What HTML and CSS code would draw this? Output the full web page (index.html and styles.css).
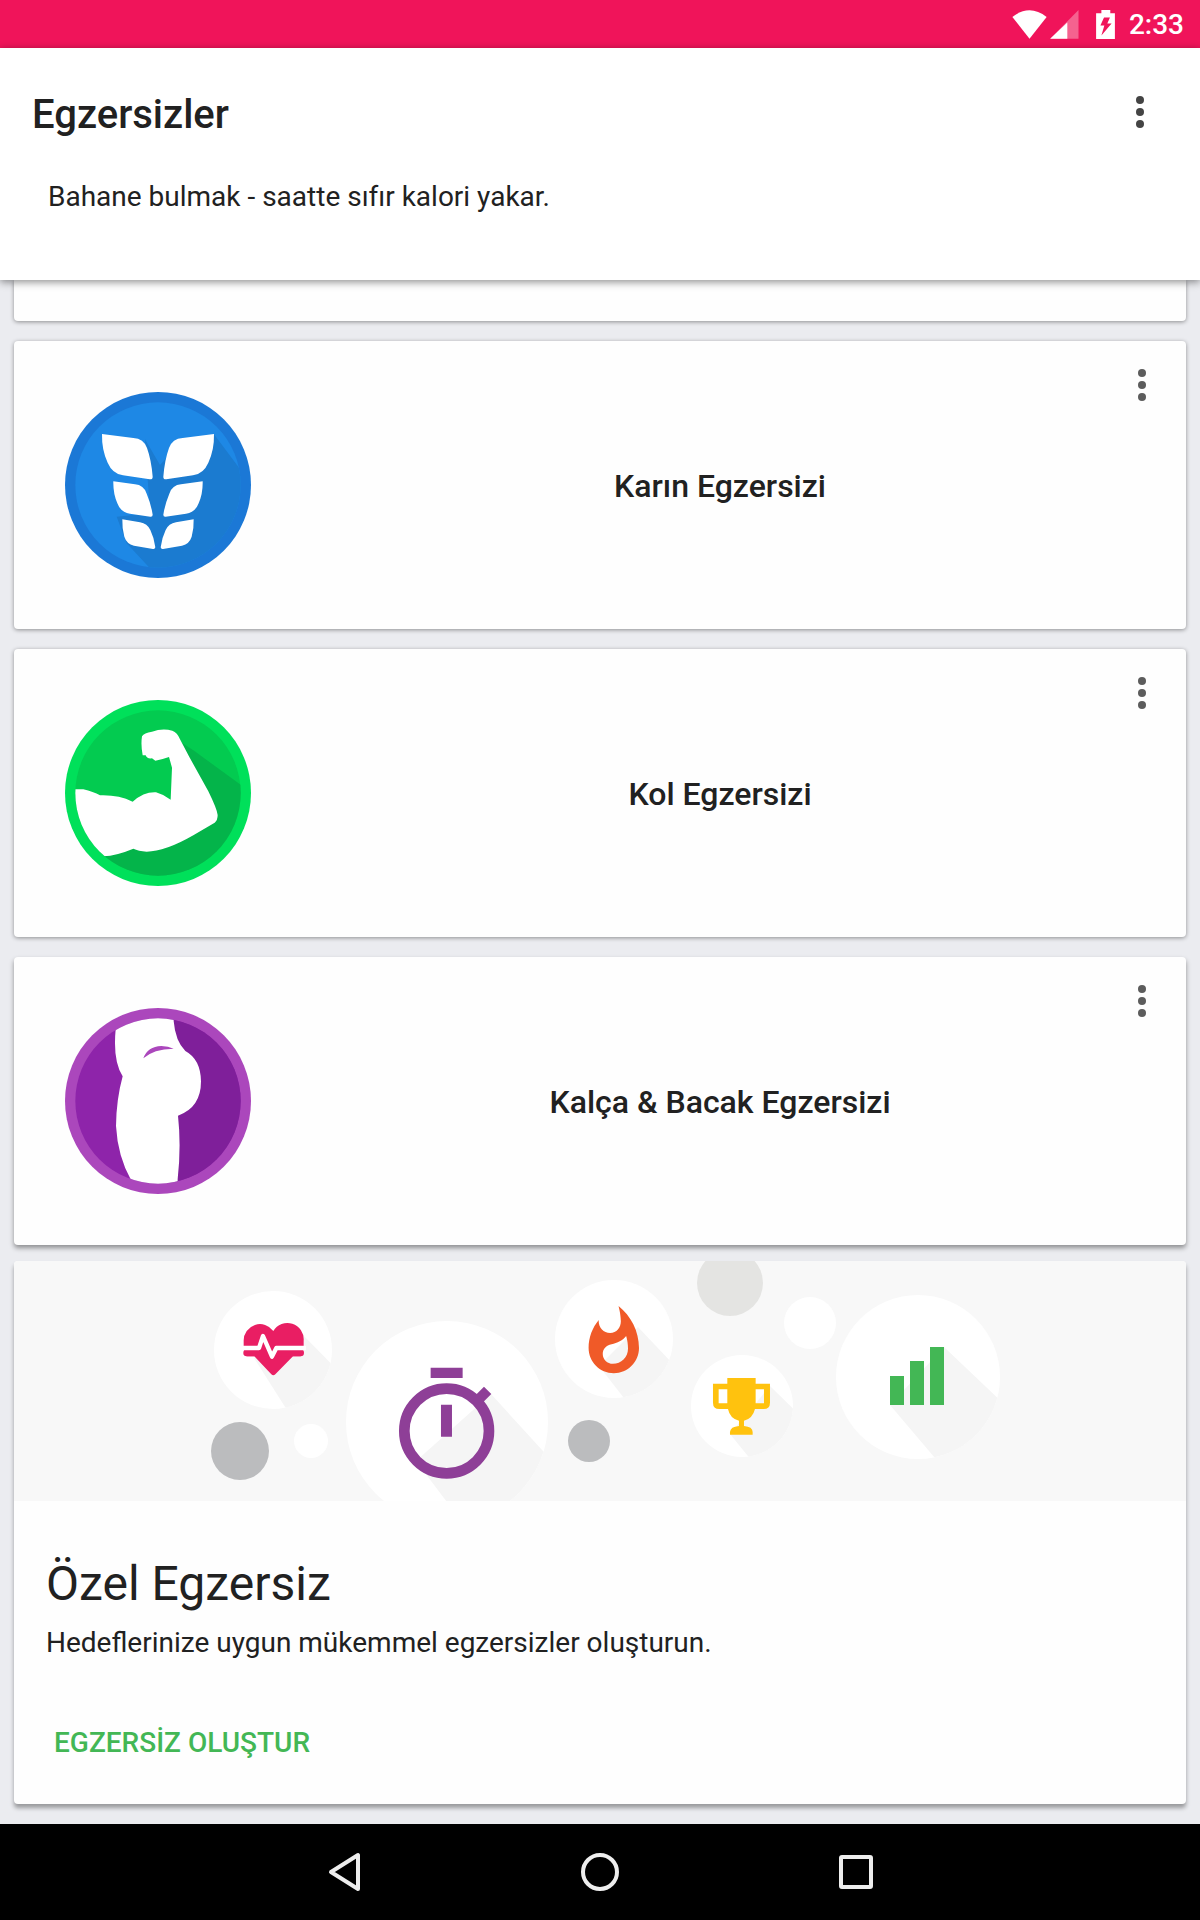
FILE: index.html
```html
<!DOCTYPE html>
<html lang="tr">
<head>
    <meta charset="UTF-8" />
    <meta name="viewport" content="width=device-width, initial-scale=1.0"/>
    <title>Egzersizler</title>
    <link rel="stylesheet" href="styles.css">
</head>
<body>
<div class="status-bar">
    <svg class="wifi" viewBox="98 28 104 88"><path d="M150 115L98 49Q150 9 202 49z"/></svg>
    <svg class="signal" viewBox="212 28 87 88">
        <path class="dim" d="M298 28V115H212z"/>
        <path d="M264 66V115H212z"/>
    </svg>
    <svg class="battery" viewBox="348 27 57 88">
        <path d="M364 27h27v10h14v78h-57V37h16z"/>
        <path class="bolt" d="M372 50h18l-8 18h13l-31 36 9-30h-12z"/>
    </svg>
    <span class="time">2:33</span>
</div>

<header class="header">
    <div class="toolbar">
        <h1>Egzersizler</h1>
        <button class="menu-btn" aria-label="Menü">
            <svg viewBox="0 0 8 32"><circle cx="4" cy="4" r="4"/><circle cx="4" cy="16" r="4"/><circle cx="4" cy="28" r="4"/></svg>
        </button>
    </div>
    <p class="quote">Bahane bulmak - saatte sıfır kalori yakar.</p>
</header>

<main class="list">
    <div class="card card-peek"></div>

    <!-- Abs -->
    <section class="card workout">
        <svg class="workout-icon" viewBox="45 36 558 558">
            <clipPath id="absClip"><circle cx="324" cy="315" r="248"/></clipPath>
            <circle cx="324" cy="315" r="279" fill="#1b78d6"/>
            <circle cx="324" cy="315" r="248" fill="#1e88e5"/>
            <path clip-path="url(#absClip)" fill="#1b7bd0" d="M285 178L330 255 380 200 492 163 566 262 640 350 560 640 370 640 230 490 200 410 300 400z"/>
            <g id="absHalf" fill="#fff">
                <path d="M156 162L250 174Q281 176 291 204Q304 240 308 290Q308 299 299 298L219 286Q187 281 173 248Q155 210 156 162z"/>
                <path d="M190 304L255 313Q281 315 290 341Q303 372 308 404Q308 411 301 410L240 401Q211 396 202 370Q189 340 190 304z"/>
                <path d="M217 418L270 427Q292 431 301 450Q313 475 316 502Q315 508 309 507L252 497Q230 492 223 470Q216 446 217 418z"/>
            </g>
            <use href="#absHalf" transform="translate(648 0) scale(-1 1)"/>
        </svg>
        <h2>Karın Egzersizi</h2>
        <button class="menu-btn card-menu" aria-label="Menü">
            <svg viewBox="0 0 8 32"><circle cx="4" cy="4" r="4"/><circle cx="4" cy="16" r="4"/><circle cx="4" cy="28" r="4"/></svg>
        </button>
    </section>

    <!-- Arm -->
    <section class="card workout">
        <svg class="workout-icon" viewBox="45 29 558 558">
            <clipPath id="armClip"><circle cx="324" cy="308" r="248"/></clipPath>
            <circle cx="324" cy="308" r="279" fill="#00e05a"/>
            <circle cx="324" cy="308" r="248" fill="#03cb50"/>
            <g clip-path="url(#armClip)">
                <path fill="#04b44a" d="M376 130L395 157 430 180 620 318 600 600 200 600 150 490 400 400z"/>
                <path fill="#fff" d="M60 297L100 297Q130 304 150 315Q205 313 248 334Q282 304 318 306Q340 312 362 328L366 232L357 200Q335 208 316 211L306 204Q290 206 287 195L278 195Q272 164 276 138Q282 127 306 124Q337 113 367 121Q382 126 390 147L418 200L475 303Q501 356 503 374Q503 390 494 397L430 435Q345 484 290 484Q265 482 250 475Q200 496 160 498L90 498z"/>
            </g>
        </svg>
        <h2>Kol Egzersizi</h2>
        <button class="menu-btn card-menu" aria-label="Menü">
            <svg viewBox="0 0 8 32"><circle cx="4" cy="4" r="4"/><circle cx="4" cy="16" r="4"/><circle cx="4" cy="28" r="4"/></svg>
        </button>
    </section>

    <!-- Hips and legs -->
    <section class="card workout">
        <svg class="workout-icon" viewBox="45 36 558 558">
            <clipPath id="legClip"><circle cx="324" cy="315" r="248"/></clipPath>
            <circle cx="324" cy="315" r="279" fill="#ab47bc"/>
            <circle cx="324" cy="315" r="248" fill="#8e24aa"/>
            <g clip-path="url(#legClip)">
                <path fill="#7f1f9a" d="M360 40H620V600H360z"/>
                <path fill="#fff" d="M199 40L197 100Q188 195 218 241Q199 310 198 390Q203 480 243 552L250 600H382L383 550Q394 450 384 359Q453 335 453 256Q452 190 406 165Q376 135 371 75V40z"/>
                <path fill="#ab47bc" d="M280 187Q293 151 334 150Q355 150 371 158Q310 159 280 187z"/>
            </g>
        </svg>
        <h2>Kalça &amp; Bacak Egzersizi</h2>
        <button class="menu-btn card-menu" aria-label="Menü">
            <svg viewBox="0 0 8 32"><circle cx="4" cy="4" r="4"/><circle cx="4" cy="16" r="4"/><circle cx="4" cy="28" r="4"/></svg>
        </button>
    </section>

    <!-- Custom workout -->
    <section class="card custom">
        <svg class="banner" viewBox="0 0 1172 240" preserveAspectRatio="xMidYMid slice">
            <clipPath id="c1"><circle cx="259" cy="89" r="59"/></clipPath>
            <clipPath id="c2"><circle cx="433" cy="161" r="101"/></clipPath>
            <clipPath id="c3"><circle cx="600" cy="78" r="59"/></clipPath>
            <clipPath id="c4"><circle cx="728" cy="145" r="51"/></clipPath>
            <clipPath id="c5"><circle cx="904" cy="116" r="82"/></clipPath>

            <g fill="#fff">
                <circle cx="259" cy="89" r="59"/>
                <circle cx="433" cy="161" r="101"/>
                <circle cx="600" cy="78" r="59"/>
                <circle cx="728" cy="145" r="51"/>
                <circle cx="904" cy="116" r="82"/>
                <circle cx="297" cy="180" r="17"/>
                <circle cx="796" cy="62" r="26"/>
            </g>
            <circle cx="226" cy="190" r="29" fill="#bbbcbe"/>
            <circle cx="575" cy="180" r="21" fill="#bbbcbe"/>
            <circle cx="716" cy="22" r="33" fill="#e4e4e2"/>

            <!-- long shadows -->
            <g fill="#f5f5f5">
                <path clip-path="url(#c1)" d="M287 72L340 126 320 170 280 160 240 97z"/>
                <path clip-path="url(#c2)" d="M477 133L590 257H445L402 200z"/>
                <path clip-path="url(#c3)" d="M624 66L680 125 640 160 620 150 585 105z"/>
                <path clip-path="url(#c4)" d="M756 125L800 168 770 210 742 205 716 173z"/>
                <path clip-path="url(#c5)" d="M930 86L1010 162 960 220 932 210 876 144z"/>
            </g>

            <!-- heart rate -->
            <g transform="translate(186 -11) scale(.3333)">
                <path fill="#e91e63" d="M131 290V272A49 49 0 0 1 220 243A49 49 0 0 1 311 272V290L302 319H279L226 373Q220 379 214 373L163 319H140L131 290z"/>
                <rect x="130" y="298" width="182" height="21" rx="10" fill="#e91e63"/>
                <path fill="none" stroke="#fff" stroke-width="13" stroke-linejoin="round" d="M124 294H177L189 258L216 320L229 294H318"/>
            </g>

            <!-- stopwatch -->
            <g transform="translate(186 -11) scale(.3333)" fill="#8e3f97">
                <path d="M692 353h96v31h-96zM723 464h33v96h-33zM852 410l22 22-24 24-22-22z"/>
                <circle cx="740" cy="543" r="127" fill="none" stroke="#8e3f97" stroke-width="32"/>
            </g>

            <!-- flame -->
            <path fill="#f05a28" transform="translate(562 43) scale(3.15)" d="M13.5.67s.74 2.65.74 4.8c0 2.06-1.35 3.73-3.41 3.73-2.07 0-3.63-1.67-3.63-3.73l.03-.36C5.21 7.51 4 10.62 4 14c0 4.42 3.58 8 8 8s8-3.58 8-8C20 8.61 17.41 3.8 13.5.67zM11.71 19c-1.78 0-3.22-1.4-3.22-3.14 0-1.62 1.05-2.76 2.81-3.12 1.77-.36 3.6-1.21 4.62-2.58.39 1.29.59 2.65.59 4.04 0 2.65-2.15 4.8-4.8 4.8z"/>

            <!-- trophy -->
            <path fill="#ffc20e" fill-rule="evenodd" transform="translate(526 -11) scale(.3333)" d="M562 384H647V401H690V458Q690 477 671 477H645Q638 506 612 512V528Q638 530 638 546V554H570V546Q571 530 597 528V512Q570 506 564 477H538Q519 477 519 458V401H562zM536 418V460H562V418zM647 418V460H672V418z"/>

            <!-- chart -->
            <path fill="#43b755" d="M876 115h14v29h-14zM896 100h14v44h-14zM916 86h14v58h-14z"/>
        </svg>
        <div class="custom-body">
            <h3>Özel Egzersiz</h3>
            <p>Hedeflerinize uygun mükemmel egzersizler oluşturun.</p>
            <button class="create-btn">EGZERSİZ OLUŞTUR</button>
        </div>
    </section>
</main>

<nav class="nav-bar">
    <button aria-label="Geri">
        <svg viewBox="0 0 48 48"><path d="M38 7V41L11 24z"/></svg>
    </button>
    <button aria-label="Ana ekran">
        <svg viewBox="0 0 48 48"><circle cx="24" cy="24" r="17"/></svg>
    </button>
    <button aria-label="Son uygulamalar">
        <svg viewBox="0 0 48 48"><rect x="9" y="9" width="30" height="30" rx="1"/></svg>
    </button>
</nav>
</body>
</html>
```
FILE: styles.css
```css
* {
    box-sizing: border-box;
}

body {
    font-family: Roboto, "Noto Sans", sans-serif;
    background: #ebecf0;
    color: #212121;
    margin: 0;
    min-height: 100vh;
    display: flex;
    flex-direction: column;
}

h1, h2, h3, p {
    margin: 0;
}

button {
    font-family: inherit;
    border: none;
    background: none;
    padding: 0;
    cursor: pointer;
}

svg {
    display: block;
}

/* Status bar */
.status-bar {
    display: flex;
    align-items: center;
    justify-content: flex-end;
    height: 48px;
    padding-right: 16px;
    background: #f0145a;
    color: #ffffff;
}

.status-bar svg {
    height: 29px;
    fill: #ffffff;
}

.wifi {
    width: 35px;
    margin-right: 3px;
}

.signal {
    width: 29px;
    margin-right: 17px;
}

.signal .dim {
    fill: #f5628f;
}

.battery {
    width: 19px;
    margin-right: 14px;
}

.status-bar .bolt {
    fill: #f0145a;
}

.time {
    font-size: 28px;
    font-weight: 500;
    line-height: 40px;
    padding-top: 2px;
}

/* Header */
.header {
    position: relative;
    z-index: 1;
    background: #ffffff;
    padding-bottom: 63px;
    box-shadow: 0 2px 8px rgba(0, 0, 0, 0.45);
}

.toolbar {
    display: flex;
    align-items: center;
    justify-content: space-between;
    height: 128px;
    padding: 0 36px 0 32px;
}

.toolbar h1 {
    font-size: 40px;
    font-weight: 500;
    line-height: 48px;
    padding-top: 6px;
}

.quote {
    padding: 1px 48px 0;
    font-size: 28px;
    line-height: 40px;
}

.menu-btn {
    display: flex;
    justify-content: center;
    align-items: center;
    width: 48px;
    height: 48px;
}

.menu-btn svg {
    width: 8px;
    height: 32px;
    fill: #444444;
}

/* Cards */
.list {
    flex: 1;
    padding: 0 14px 20px;
}

.card {
    background: #fefefe;
    border-radius: 4px;
    margin-bottom: 20px;
    box-shadow: 0 1px 4px rgba(0, 0, 0, 0.4);
}

.card-peek {
    height: 41px;
    border-radius: 0 0 4px 4px;
}

.workout {
    position: relative;
    display: flex;
    align-items: center;
    min-height: 288px;
    padding: 0 48px 0 51px;
}

.workout-icon {
    flex: none;
    width: 186px;
    height: 186px;
    margin-right: 51px;
}

.workout h2 {
    flex: 1;
    text-align: center;
    font-size: 32px;
    font-weight: 500;
    line-height: 40px;
    padding-top: 2px;
}

.card-menu {
    position: absolute;
    top: 20px;
    right: 20px;
}

.card-menu svg {
    fill: #5c5c5c;
}

.workout:nth-last-child(2) {
    box-shadow: 0 3px 5px rgba(0, 0, 0, 0.4);
}

.custom {
    margin: -4px 0 0;
    overflow: hidden;
    box-shadow: 0 4px 4px rgba(0, 0, 0, 0.35);
}

.banner {
    width: 100%;
    height: 240px;
    background: #f8f8f8;
}

.custom-body {
    padding: 55px 32px 26px;
}

.custom-body h3 {
    font-size: 48px;
    font-weight: 400;
    line-height: 56px;
}

.custom-body p {
    margin-top: 11px;
    font-size: 28px;
    line-height: 40px;
}

.create-btn {
    height: 72px;
    margin-top: 43px;
    padding: 0 8px;
    font-size: 28px;
    font-weight: 500;
    color: #43b755;
}

/* Navigation bar */
.nav-bar {
    display: flex;
    justify-content: center;
    height: 96px;
    background: #000000;
}

.nav-bar button {
    display: flex;
    justify-content: center;
    align-items: center;
    width: 256px;
}

.nav-bar svg {
    width: 48px;
    height: 48px;
    fill: none;
    stroke: #eeeeee;
    stroke-width: 4;
    stroke-linejoin: round;
}
```
